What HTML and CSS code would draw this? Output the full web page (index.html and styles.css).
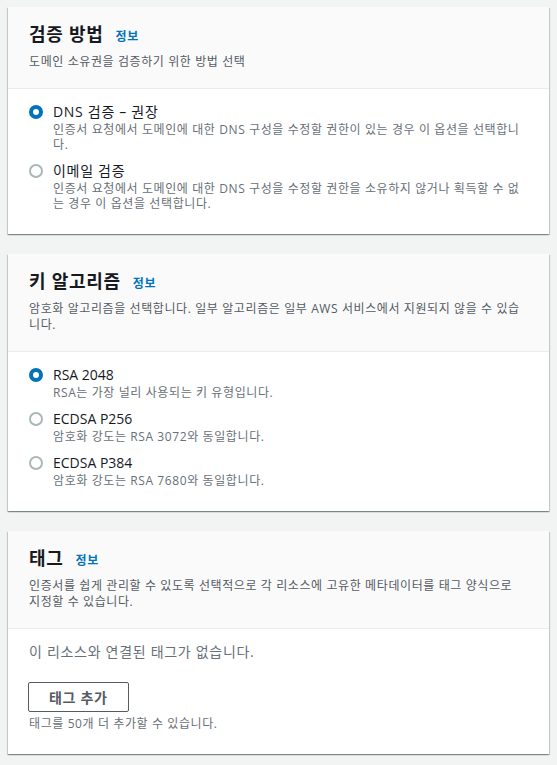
FILE: index.html
```html
<!DOCTYPE html>
<html lang="ko">
<head>
<meta charset="utf-8">
<link rel="stylesheet" href="styles.css">
</head>
<body>
<div class="stack">
  <section class="card">
    <header class="card-header">
      <h2 class="title">검증 방법<a class="info">정보</a></h2>
      <p class="desc">도메인 소유권을 검증하기 위한 방법 선택</p>
    </header>
    <div class="card-body">
      <div class="radios">
        <div class="radio-item">
          <span class="radio checked"></span>
          <div class="radio-text">
            <div class="radio-label ko">DNS 검증 – 권장</div>
            <div class="radio-desc">인증서 요청에서 도메인에 대한 DNS 구성을 수정할 권한이 있는 경우 이 옵션을 선택합니다.</div>
          </div>
        </div>
        <div class="radio-item">
          <span class="radio"></span>
          <div class="radio-text">
            <div class="radio-label ko">이메일 검증</div>
            <div class="radio-desc">인증서 요청에서 도메인에 대한 DNS 구성을 수정할 권한을 소유하지 않거나 획득할 수 없는 경우 이 옵션을 선택합니다.</div>
          </div>
        </div>
      </div>
    </div>
  </section>

  <section class="card">
    <header class="card-header">
      <h2 class="title">키 알고리즘<a class="info">정보</a></h2>
      <p class="desc">암호화 알고리즘을 선택합니다. 일부 알고리즘은 일부 AWS 서비스에서 지원되지 않을 수 있습니다.</p>
    </header>
    <div class="card-body">
      <div class="radios">
        <div class="radio-item">
          <span class="radio checked"></span>
          <div class="radio-text">
            <div class="radio-label">RSA 2048</div>
            <div class="radio-desc">RSA는 가장 널리 사용되는 키 유형입니다.</div>
          </div>
        </div>
        <div class="radio-item">
          <span class="radio"></span>
          <div class="radio-text">
            <div class="radio-label">ECDSA P256</div>
            <div class="radio-desc">암호화 강도는 RSA 3072와 동일합니다.</div>
          </div>
        </div>
        <div class="radio-item">
          <span class="radio"></span>
          <div class="radio-text">
            <div class="radio-label">ECDSA P384</div>
            <div class="radio-desc">암호화 강도는 RSA 7680와 동일합니다.</div>
          </div>
        </div>
      </div>
    </div>
  </section>

  <section class="card">
    <header class="card-header">
      <h2 class="title">태그<a class="info">정보</a></h2>
      <p class="desc">인증서를 쉽게 관리할 수 있도록 선택적으로 각 리소스에 고유한 메타데이터를 태그 양식으로<br>지정할 수 있습니다.</p>
    </header>
    <div class="card-body tags">
      <p class="empty">이 리소스와 연결된 태그가 없습니다.</p>
      <button class="btn" type="button">태그 추가</button>
      <p class="hint">태그를 50개 더 추가할 수 있습니다.</p>
    </div>
  </section>
</div>
</body>
</html>
```

FILE: styles.css
```css
* { box-sizing: border-box; }

body {
  margin: 0;
  padding: 7px 8px;
  background: #f2f3f3;
  font-family: "Open Sans", "Noto Sans CJK KR", sans-serif;
  color: #16191f;
}

.stack {
  display: flex;
  flex-direction: column;
  gap: 20px;
}

.card {
  background: #ffffff;
  box-shadow: 0 1px 1px 0 rgba(0, 28, 36, 0.3),
              1px 1px 1px 0 rgba(0, 28, 36, 0.15),
              -1px 1px 1px 0 rgba(0, 28, 36, 0.15);
}

.card-header {
  background: #fafafa;
  border-bottom: 1px solid #eaeded;
  padding: 16px 20px 18px 21px;
}

.title {
  margin: 0;
  font-size: 18px;
  line-height: 22px;
  font-weight: 700;
  letter-spacing: 0.04em;
  color: #16191f;
  display: flex;
  align-items: baseline;
}

.info {
  margin-left: 12px;
  font-size: 12px;
  font-weight: 700;
  letter-spacing: 0.05em;
  color: #0073bb;
  text-decoration: none;
}

.desc {
  margin: 6px 0 0;
  font-size: 12px;
  line-height: 16px;
  letter-spacing: 0.05em;
  color: #545b64;
}

.card-body {
  padding: 13px 20px 23px 20px;
}

.radios {
  display: flex;
  flex-direction: column;
  gap: 9px;
}

.radio-item {
  display: flex;
  align-items: flex-start;
  gap: 10px;
}

.radio {
  flex: none;
  width: 14px;
  height: 14px;
  margin: 3px 0 0 1px;
  border-radius: 50%;
  border: 2px solid #aab7b8;
  background: #ffffff;
}

.radio.checked {
  border: 4px solid #0073bb;
}

.radio-text {
  flex: 1;
  min-width: 0;
}

.radio-label {
  font-size: 14px;
  line-height: 20px;
  color: #16191f;
}

.radio-label.ko {
  letter-spacing: 0.05em;
}

.radio-desc {
  font-size: 12px;
  line-height: 15px;
  letter-spacing: 0.05em;
  color: #687078;
}

.tags {
  display: flex;
  flex-direction: column;
  align-items: flex-start;
}

.empty {
  margin: 0 0 0 1px;
  font-size: 14px;
  line-height: 20px;
  letter-spacing: 0.05em;
  color: #687078;
}

.btn {
  margin-top: 20px;
  height: 30px;
  padding: 0 20px;
  border: 1px solid #545b64;
  border-radius: 2px;
  background: #ffffff;
  font-family: "Open Sans", "Noto Sans CJK KR", sans-serif;
  font-size: 14px;
  font-weight: 700;
  letter-spacing: 0.05em;
  color: #545b64;
}

.hint {
  margin: 4px 0 0 1px;
  font-size: 12px;
  line-height: 15px;
  letter-spacing: 0.05em;
  color: #687078;
}
```
